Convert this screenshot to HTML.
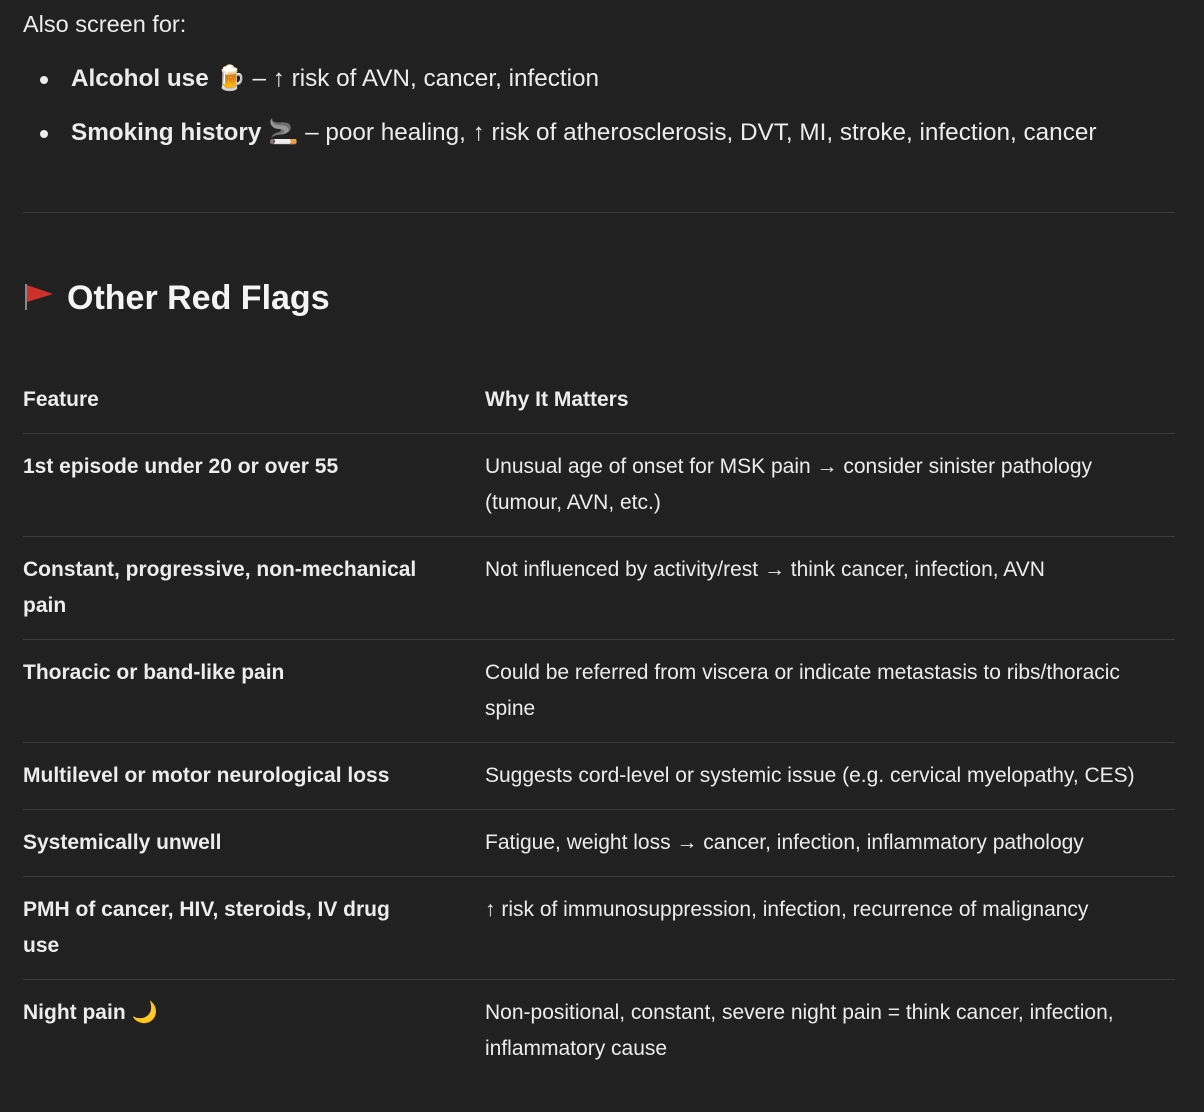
<!DOCTYPE html>
<html><head><meta charset="utf-8"><style>
html,body{margin:0;padding:0;background:#212121;}
body{width:1204px;height:1112px;overflow:hidden;color:#ececec;font-family:"Liberation Sans","DejaVu Sans",sans-serif;position:relative;}
.p{position:absolute;left:23px;top:9px;font-size:23.5px;line-height:30px;}
ul{position:absolute;left:23px;top:64px;margin:0;padding:0;font-size:24.3px;line-height:30px;width:1160px;list-style:none;}
li{margin:0 0 24px 0;padding-left:48px;position:relative;}
li::before{content:"";position:absolute;left:17px;top:12px;width:8px;height:8px;border-radius:50%;background:#ececec;}
hr{position:absolute;left:23px;top:212px;width:1152px;margin:0;border:0;border-top:1px solid #3a3a3a;}
h2{position:absolute;left:23px;top:276px;margin:0;font-size:34px;line-height:44px;font-weight:bold;color:#f4f4f4;}
.flag{display:inline-block;vertical-align:middle;width:32px;height:32px;margin-right:12px;position:relative;top:-4px;}
table{position:absolute;left:23px;top:369px;width:1152px;border-collapse:collapse;font-size:21px;line-height:36px;table-layout:fixed;}
td,th{text-align:left;vertical-align:top;padding:15px 8px 15px 0;border-bottom:1px solid #3c3c3c;}
th{font-weight:bold;padding-top:13px;}
td:first-child,th:first-child{font-weight:bold;padding-right:58px;}
tr:last-child td{border-bottom:none;}
</style></head><body>
<div class="p">Also screen for:</div>
<ul>
<li><b>Alcohol use</b> 🍺 – ↑ risk of AVN, cancer, infection</li>
<li><b>Smoking history</b> 🚬 – poor healing, ↑ risk of atherosclerosis, DVT, MI, stroke, infection, cancer</li>
</ul>
<hr>
<h2><svg class="flag" viewBox="0 0 32 32"><rect x="2" y="4" width="2" height="26" fill="#888"/><path d="M4 5 L30 14 L4 22 Z" fill="#d0302a"/></svg>Other Red Flags</h2>
<table>
<colgroup><col style="width:462px"><col style="width:690px"></colgroup>
<tr><th>Feature</th><th>Why It Matters</th></tr>
<tr><td>1st episode under 20 or over 55</td><td>Unusual age of onset for MSK pain → consider sinister pathology (tumour, AVN, etc.)</td></tr>
<tr><td>Constant, progressive, non-mechanical pain</td><td>Not influenced by activity/rest → think cancer, infection, AVN</td></tr>
<tr><td>Thoracic or band-like pain</td><td>Could be referred from viscera or indicate metastasis to ribs/thoracic spine</td></tr>
<tr><td>Multilevel or motor neurological loss</td><td>Suggests cord-level or systemic issue (e.g. cervical myelopathy, CES)</td></tr>
<tr><td>Systemically unwell</td><td>Fatigue, weight loss → cancer, infection, inflammatory pathology</td></tr>
<tr><td>PMH of cancer, HIV, steroids, IV drug use</td><td>↑ risk of immunosuppression, infection, recurrence of malignancy</td></tr>
<tr><td>Night pain 🌙</td><td>Non-positional, constant, severe night pain = think cancer, infection, inflammatory cause</td></tr>
</table>
</body></html>
